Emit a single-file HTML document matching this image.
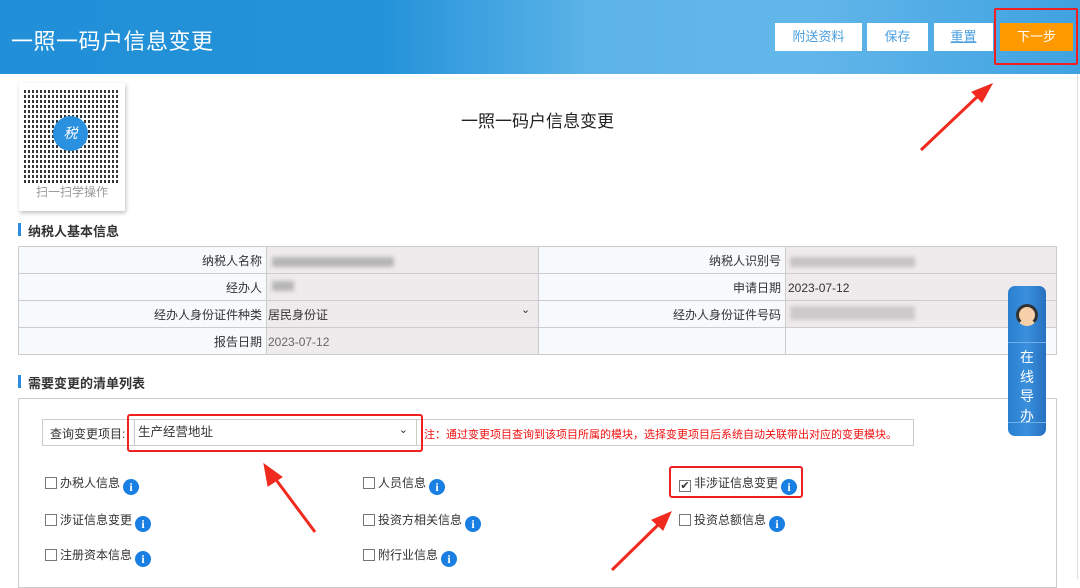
<!DOCTYPE html>
<html><head><meta charset="utf-8"><style>
*{margin:0;padding:0;box-sizing:border-box}
body{width:1080px;height:579px;overflow:hidden;background:#fff;font-family:"Liberation Sans","Noto Sans CJK SC",sans-serif;position:relative;color:#333}
.abs{position:absolute}
.hdr{left:0;top:0;width:1080px;height:74px;background:linear-gradient(90deg,#2290d8 0%,#2392d9 35%,#5db4e8 55%,#62b6ea 75%,#3fa2e0 100%)}
.hdr .t{left:11px;top:24px;font-size:22px;color:#fff;letter-spacing:0.5px}
.btn{top:23px;height:28px;background:#fff;color:#4a9fe0;font-size:13px;text-align:center;line-height:28px}
.lbl{font-size:12px;color:#333;line-height:14px}
.rl{text-align:right;width:240px}
.cb{position:absolute;font-size:12px;color:#333;line-height:16px;white-space:nowrap}
.cb i{display:inline-block;width:12px;height:12px;border:1px solid #777;vertical-align:-2px;margin-right:3px;background:#fff;font-style:normal;font-size:11px;line-height:10px;text-align:center}
.cb b{display:inline-block;width:16px;height:16px;border-radius:50%;background:#1a7fe2;color:#fff;font-weight:bold;font-size:12px;line-height:16px;text-align:center;vertical-align:-4px;margin-left:3px;font-family:"Liberation Serif",serif}
.sec{font-size:13px;font-weight:bold;color:#333}
.sec:before{content:"";position:absolute;left:-10px;top:2px;width:3px;height:13px;background:#2a8ce0}
.blur{position:absolute;background:#a8a8a8;filter:blur(2px);opacity:.8}
</style></head><body>
<div class="abs hdr"><div class="abs t">一照一码户信息变更</div></div>
<div class="abs btn" style="left:775px;width:87px">附送资料</div>
<div class="abs btn" style="left:867px;width:61px">保存</div>
<div class="abs btn" style="left:934px;width:59px;text-decoration:underline">重置</div>
<div class="abs btn" style="left:1000px;width:73px;background:#ff9900;color:#fff">下一步</div>
<div class="abs" style="left:994px;top:8px;width:84px;height:57px;border:2px solid #f02020;border-radius:2px"></div>

<div class="abs" style="left:19px;top:83px;width:106px;height:128px;background:#fff;box-shadow:1px 2px 4px rgba(0,0,0,.25)">
<div class="abs" style="left:5px;top:5px;width:95px;height:95px;background:repeating-linear-gradient(0deg,#111 0 3px,#fff 3px 5px),#111;opacity:.85"></div>
<div class="abs" style="left:5px;top:5px;width:95px;height:95px;background:repeating-linear-gradient(90deg,transparent 0 2px,#fff 2px 4px)"></div>
<div class="abs" style="left:34px;top:33px;width:35px;height:35px;border-radius:50%;background:#2a90e0;color:#fff;font-size:14px;text-align:center;line-height:35px;font-style:italic">税</div>
<div class="abs" style="left:0;top:100px;width:106px;text-align:center;font-size:12px;color:#999">扫一扫学操作</div></div>
<div class="abs" style="left:461px;top:107px;font-size:17px;color:#222">一照一码户信息变更</div>

<div class="abs sec" style="left:28px;top:221px">纳税人基本信息</div>
<div class="abs" style="left:19px;top:247px;width:247px;height:107px;background:#f6fafc"></div>
<div class="abs" style="left:266px;top:247px;width:272px;height:107px;background:#efebec"></div>
<div class="abs" style="left:785px;top:247px;width:271px;height:80px;background:#efebec"></div>
<div class="abs" style="left:785px;top:328px;width:271px;height:26px;background:#f6fafc"></div>
<div class="abs" style="left:539px;top:247px;width:246px;height:107px;background:#f6fafc"></div>
<div class="abs" style="left:18px;top:246px;width:1039px;height:109px;border:1px solid #ccc"></div>
<div class="abs" style="left:18px;top:273px;width:1039px;border-top:1px solid #ccc"></div>
<div class="abs" style="left:18px;top:300px;width:1039px;border-top:1px solid #ccc"></div>
<div class="abs" style="left:18px;top:327px;width:1039px;border-top:1px solid #ccc"></div>
<div class="abs" style="left:266px;top:247px;height:107px;border-left:1px solid #ccc"></div>
<div class="abs" style="left:538px;top:247px;height:107px;border-left:1px solid #ccc"></div>
<div class="abs" style="left:785px;top:247px;height:107px;border-left:1px solid #ccc"></div>
<div class="abs lbl rl" style="left:22px;top:254px">纳税人名称</div>
<div class="abs lbl rl" style="left:22px;top:281px">经办人</div>
<div class="abs lbl rl" style="left:22px;top:308px">经办人身份证件种类</div>
<div class="abs lbl rl" style="left:22px;top:335px">报告日期</div>
<div class="abs lbl" style="left:268px;top:308px">居民身份证</div>
<div class="abs lbl" style="left:521px;top:303px;font-size:11px">&#8964;</div>
<div class="abs lbl" style="left:268px;top:335px;color:#666">2023-07-12</div>
<div class="abs lbl rl" style="left:541px;top:254px">纳税人识别号</div>
<div class="abs lbl rl" style="left:541px;top:281px">申请日期</div>
<div class="abs lbl rl" style="left:541px;top:308px">经办人身份证件号码</div>
<div class="abs lbl" style="left:788px;top:281px">2023-07-12</div>
<div class="blur" style="left:272px;top:257px;width:122px;height:10px"></div>
<div class="blur" style="left:272px;top:281px;width:22px;height:10px"></div>
<div class="blur" style="left:790px;top:257px;width:125px;height:10px;opacity:.6"></div>
<div class="blur" style="left:790px;top:306px;width:125px;height:14px;opacity:.5"></div>

<div class="abs sec" style="left:28px;top:373px">需要变更的清单列表</div>
<div class="abs" style="left:18px;top:398px;width:1039px;height:190px;border:1px solid #ccc"></div>
<div class="abs" style="left:42px;top:419px;width:872px;height:27px;border:1px solid #ccc"></div>
<div class="abs" style="left:50px;top:425px;font-size:12px">查询变更项目:</div>
<div class="abs" style="left:134px;top:420px;width:283px;height:25px;border-left:1px solid #ccc;border-right:1px solid #ccc;font-size:12.5px;line-height:25px;padding-left:3px">生产经营地址<span style="position:absolute;right:8px;top:-2px;font-size:11px">&#8964;</span></div>
<div class="abs" style="left:127px;top:414px;width:296px;height:38px;border:2px solid #f02020;border-radius:3px"></div>
<div class="abs" style="left:424px;top:426px;font-size:11px;color:#f01010;white-space:nowrap">注：通过变更项目查询到该项目所属的模块，选择变更项目后系统自动关联带出对应的变更模块。</div>

<div class="cb" style="left:45px;top:475px"><i></i>办税人信息<b>i</b></div>
<div class="cb" style="left:45px;top:512px"><i></i>涉证信息变更<b>i</b></div>
<div class="cb" style="left:45px;top:547px"><i></i>注册资本信息<b>i</b></div>
<div class="cb" style="left:363px;top:475px"><i></i>人员信息<b>i</b></div>
<div class="cb" style="left:363px;top:512px"><i></i>投资方相关信息<b>i</b></div>
<div class="cb" style="left:363px;top:547px"><i></i>附行业信息<b>i</b></div>
<div class="cb" style="left:679px;top:475px"><i>✔</i>非涉证信息变更<b>i</b></div>
<div class="cb" style="left:679px;top:512px"><i></i>投资总额信息<b>i</b></div>
<div class="abs" style="left:669px;top:466px;width:134px;height:32px;border:2px solid #f02020;border-radius:3px"></div>

<div class="abs" style="left:1008px;top:286px;width:38px;height:150px;border-radius:7px;background:linear-gradient(90deg,#2a80d0,#3a90dc 50%,#2670c0)">
<div class="abs" style="left:8px;top:18px;width:22px;height:22px;border-radius:50%;background:#f5d0a8;border:3px solid #333;border-bottom-color:#f5d0a8"></div>
<div class="abs" style="left:0;top:56px;width:38px;border-top:1px solid #6fb0e8"></div>
<div class="abs" style="left:0;top:62px;width:38px;text-align:center;color:#fff;font-size:14px;line-height:19.5px">在<br>线<br>导<br>办</div>
<div class="abs" style="left:0;top:136px;width:38px;border-top:1px solid #6fb0e8"></div></div>
<div class="abs" style="left:1077px;top:74px;height:505px;border-left:1px solid #ddd"></div>

<svg class="abs" style="left:0;top:0" width="1080" height="579">
<g fill="#f02a1e" stroke="#f02a1e">
<line x1="921" y1="150" x2="978" y2="96" stroke-width="3"/><polygon points="992,84 972,92 982,102"/>
<line x1="315" y1="532" x2="274" y2="477" stroke-width="3"/><polygon points="264,464 268,486 282,477"/>
<line x1="612" y1="570" x2="660" y2="523" stroke-width="3"/><polygon points="671,512 652,520 663,530"/>
</g></svg>
</body></html>
